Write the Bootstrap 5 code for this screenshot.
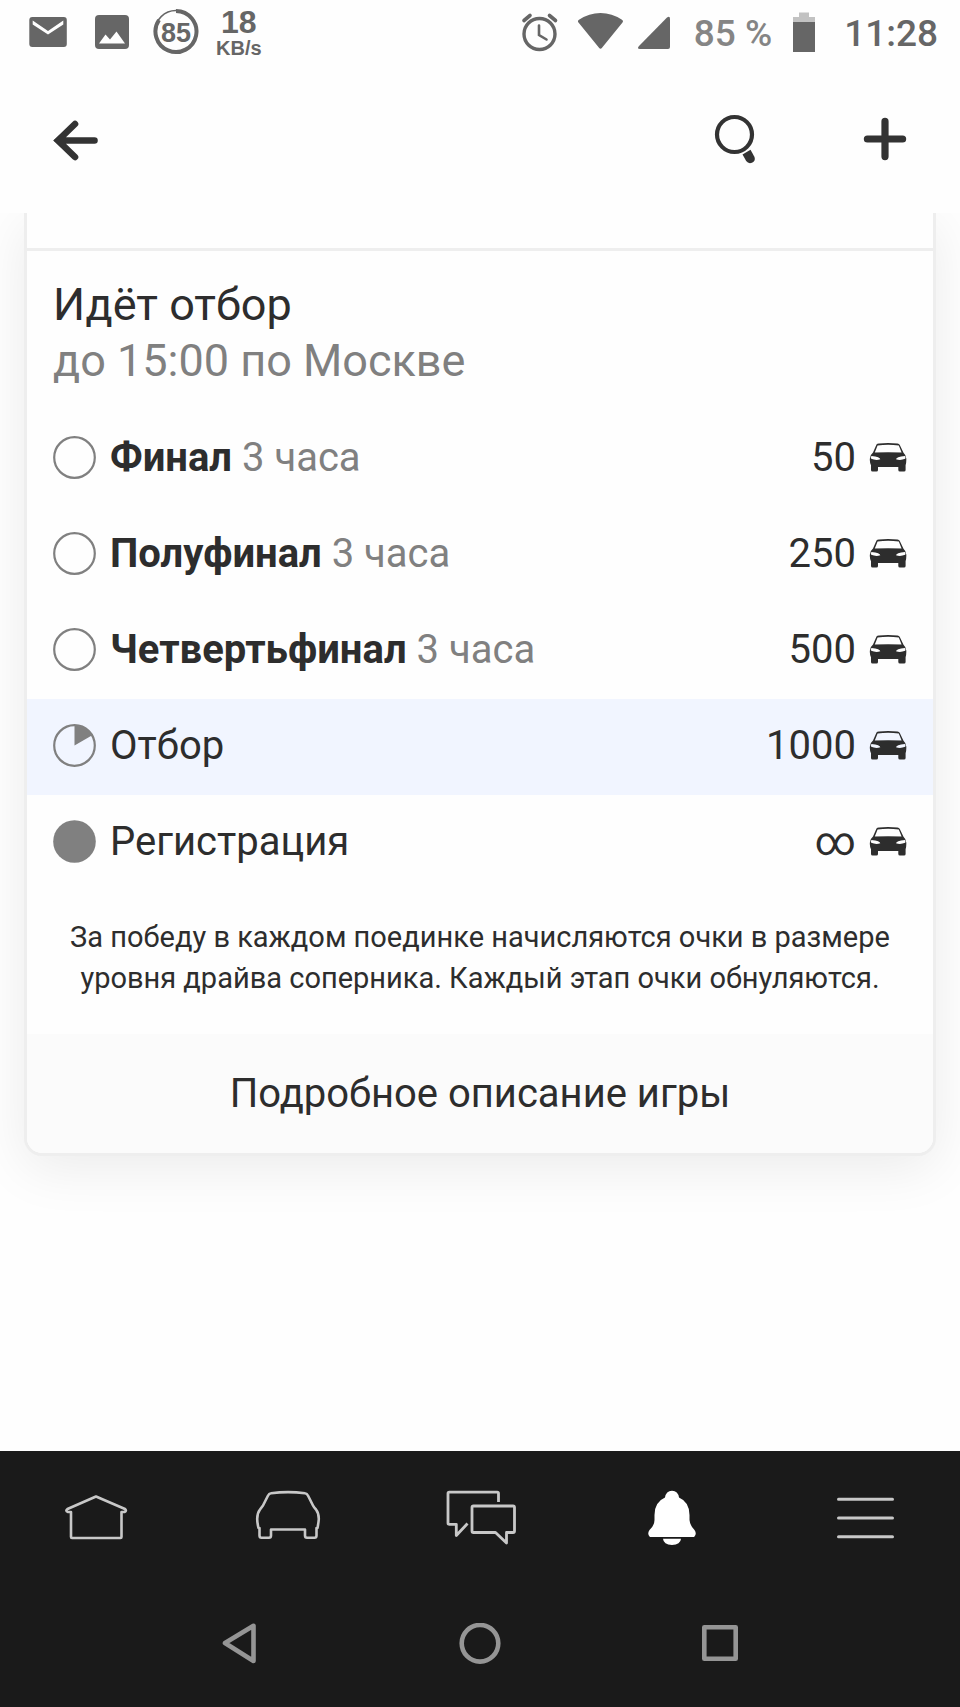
<!DOCTYPE html>
<html lang="ru">
<head>
<meta charset="utf-8">
<meta name="viewport" content="width=device-width, initial-scale=1">
<title>Идёт отбор</title>
<link href="https://cdn.jsdelivr.net/npm/bootstrap@5.3.0/dist/css/bootstrap.min.css" rel="stylesheet">
<style>
  body { font-family: Roboto, "Noto Sans", sans-serif; background: #fefefe; color: #2d2d2d; font-size: 40px; line-height: 48px; }
  svg { display: block; flex: none; }
  .status-bar { height: 64px; padding: 0 22px 0 24px; color: #666; }
  .status-left { gap: 16px; }
  .status-right { gap: 12px; font-size: 37px; font-weight: 500; }
  .status-right span, .status-right time { padding-top: 4px; }
  .charge { color: #858585; }
  .net-speed { font-family: "Liberation Sans", sans-serif; font-weight: 700; font-size: 20px; line-height: 20px; padding-bottom: 1px; }
  .net-speed b { font-size: 32px; line-height: 32px; }
  .app-bar { height: 149px; padding: 0 48px; gap: 72px; }
  .app-bar .btn { color: #333; }
  .stage-area { padding: 0 24px; }
  .game-card { border: 3px solid #eee; border-top: 0; border-radius: 0 0 18px 18px; background: #fefefe; box-shadow: 0 12px 54px rgba(0, 0, 0, .08); }
  .card-head { height: 35px; }
  .game-title { border-top: 3px solid #eee; padding: 26px 26px 22px; font-size: 45px; line-height: 56px; font-weight: 400; }
  .soft { color: #808080; font-weight: 400; }
  .stage { height: 96px; padding: 0 26px 2px; }
  .stage.current { background: #f1f5ff; }
  .stage-name { gap: 14px; }
  .stage-limit { gap: 13px; }
  .stage-name svg { margin-bottom: 2px; color: #808080; }
  .hint { font-size: 29px; line-height: 41px; padding: 26px 26px 35px; }
  .more { background: #fbfbfb; color: inherit; padding: 36px 26px 35px; border-radius: 0 0 15px 15px; }
  .bottom { background: #1a1a1a; color: #c8c8c8; }
  .tabs { height: 132px; }
  .tabs a { color: inherit; }
  .tabs a.active { color: #fff; }
  .system { height: 124px; color: #959595; }
  .system .btn { width: 25%; color: inherit; }
</style>
</head>
<body class="d-flex flex-column min-vh-100">
<svg width="0" height="0" class="position-absolute" aria-hidden="true">
  <symbol id="car" viewBox="0 0 38 30">
    <path fill="currentColor" fill-rule="evenodd" d="M7.500 1.500 Q8 .8 10 .6 Q19 -.4 28.500 .6 Q30.200 .8 30.800 2 L34.500 9.800 Q37 12 37.300 15.500 Q37.500 19 36.600 22.200 V27 Q36.600 28.500 35 28.500 H31 Q29.300 28.500 29.300 27 V24 H9 V27 Q9 28.500 7.400 28.500 H3.600 Q2 28.500 2 27 V22.200 Q.5 19 .9 15.500 Q1 12 4 9.600 Z M8.600 2.400 L5.800 9.600 Q19 9 32.600 9.600 L29.800 2.400 Q19 1 8.600 2.400 Z M2.500 13 Q1.500 14.200 2.200 15.800 Q7 17.800 11.300 16.300 Q11.200 14 2.500 13 Z M35.800 13 Q27.200 14 27 16.300 Q31.500 17.800 36.200 15.800 Q36.800 14.200 35.800 13 Z"/>
  </symbol>
  <symbol id="ring" viewBox="0 0 43 43"><circle cx="21.500" cy="21.500" r="20.300" fill="none" stroke="currentColor" stroke-width="2.200"/></symbol>
</svg>

<header>
  <div class="status-bar d-flex justify-content-between align-items-center">
    <div class="status-left d-flex align-items-center">
      <svg width="48" height="64" fill="#666"><rect x="5.300" y="17" width="37.500" height="30" rx="3"/><path d="M8.700 20.500 L24 31 L39.300 20.500 V24.500 L24 34.500 L8.700 24.500 Z" fill="#fefefe"/></svg>
      <svg width="48" height="64" fill="#666"><rect x="7" y="15" width="34" height="34" rx="4"/><path d="M11 43.500 L17.500 34.500 L22 39.500 L28.500 31.500 L37 43.500 Z" fill="#fefefe"/></svg>
      <svg width="48" height="64" fill="none" stroke="#666"><circle cx="24" cy="31.500" r="21" stroke-width="1.500"/><path d="M24 11 A20.500 20.500 0 1 1 7 20" stroke-width="4"/><text x="24" y="42" text-anchor="middle" fill="#666" stroke="none" font-family="Liberation Sans" font-weight="700" font-size="27">85</text></svg>
      <div class="net-speed d-flex flex-column align-items-center"><b>18</b><span>KB/s</span></div>
    </div>
    <div class="status-right d-flex align-items-center">
      <svg width="48" height="64" fill="none" stroke="#666" stroke-linecap="round"><circle cx="21.500" cy="34" r="15.500" stroke-width="3.400"/><path d="M21 25.500 V35 L28.500 39.500" stroke-width="2.600"/><path d="M6 20.500 L12 15.500 M37.500 20.500 L31.500 15.500" stroke-width="3.600"/></svg>
      <svg width="48" height="64" fill="#666"><path d="M.5 22.500 Q-.8 21 1 19.800 Q11 13 22.500 13 Q34 13 44 19.800 Q45.700 21 44.500 22.500 L24 47.800 Q22.500 49.600 21 47.800 Z"/></svg>
      <svg width="36" height="64" fill="#666"><path d="M1 46 L29 17.500 Q32 15.500 32 19 V47 Q32 49 30 49 H2 Q-1.500 49 1 46 Z"/></svg>
      <span class="charge ms-2">85 %</span>
      <svg class="ms-2" width="24" height="64"><path d="M7 12.500 h10 v4.500 h6 v5 H1 V17 h6 Z" fill="#c2c2c2"/><path d="M1 22 h22 v30 H1 Z" fill="#666"/></svg>
      <time class="ms-3">11:28</time>
    </div>
  </div>
  <div class="app-bar d-flex align-items-center">
    <button class="btn border-0 p-0 me-auto" aria-label="Назад"><svg width="54" height="54" fill="none" stroke="currentColor" stroke-width="6.600" stroke-linecap="round"><path d="M27 12 L10 28.500 L27 45 M13 28.500 H46.500"/><path d="M5.500 28.500 L13 22 V35 Z" fill="currentColor" stroke="none"/></svg></button>
    <button class="btn border-0 p-0" aria-label="Поиск"><svg width="72" height="54" fill="none" stroke="currentColor"><circle cx="20.500" cy="22.500" r="17.500" stroke-width="4.200"/><path d="M28.500 42.500 L36.500 37.800 L40.500 45 Q41.800 49 38 50.800 Q34.200 52 32.200 49 Z" fill="currentColor" stroke="none"/></svg></button>
    <button class="btn border-0 p-0" aria-label="Добавить"><svg width="54" height="54" fill="none" stroke="currentColor" stroke-width="7.200" stroke-linecap="round"><path d="M27 9.400 V44.600 M9.400 27 H44.600"/></svg></button>
  </div>
</header>

<main class="stage-area flex-grow-1 overflow-hidden">
  <section class="game-card">
    <div class="card-head"></div>
    <h1 class="game-title m-0">Идёт отбор<br><span class="soft">до 15:00 по Москве</span></h1>
    <ul class="list-unstyled m-0">
      <li class="stage d-flex justify-content-between align-items-center">
        <div class="stage-name d-flex align-items-center"><svg width="43" height="43"><use href="#ring"/></svg><span><b>Финал</b> <span class="soft">3 часа</span></span></div>
        <div class="stage-limit d-flex align-items-center">50 <svg width="38" height="30"><use href="#car"/></svg></div>
      </li>
      <li class="stage d-flex justify-content-between align-items-center">
        <div class="stage-name d-flex align-items-center"><svg width="43" height="43"><use href="#ring"/></svg><span><b>Полуфинал</b> <span class="soft">3 часа</span></span></div>
        <div class="stage-limit d-flex align-items-center">250 <svg width="38" height="30"><use href="#car"/></svg></div>
      </li>
      <li class="stage d-flex justify-content-between align-items-center">
        <div class="stage-name d-flex align-items-center"><svg width="43" height="43"><use href="#ring"/></svg><span><b>Четвертьфинал</b> <span class="soft">3 часа</span></span></div>
        <div class="stage-limit d-flex align-items-center">500 <svg width="38" height="30"><use href="#car"/></svg></div>
      </li>
      <li class="stage current d-flex justify-content-between align-items-center">
        <div class="stage-name d-flex align-items-center"><svg width="43" height="43"><use href="#ring"/><path d="M21.500 21.500 V1.500 A20 20 0 0 1 38.800 11.500 Z" fill="currentColor"/></svg><span>Отбор</span></div>
        <div class="stage-limit d-flex align-items-center">1000 <svg width="38" height="30"><use href="#car"/></svg></div>
      </li>
      <li class="stage d-flex justify-content-between align-items-center">
        <div class="stage-name d-flex align-items-center"><svg width="43" height="43"><circle cx="21.500" cy="21.500" r="21.300" fill="currentColor"/></svg><span>Регистрация</span></div>
        <div class="stage-limit d-flex align-items-center">∞ <svg width="38" height="30"><use href="#car"/></svg></div>
      </li>
    </ul>
    <p class="hint text-center m-0">За победу в каждом поединке начисляются очки в размере уровня драйва соперника. Каждый этап очки обнуляются.</p>
    <a href="#" class="more d-block text-center text-decoration-none">Подробное описание игры</a>
  </section>
</main>

<footer class="bottom">
  <nav class="tabs row row-cols-5 g-0 align-items-center">
    <a href="#" class="col d-flex justify-content-center" aria-label="Дом"><svg width="72" height="60" fill="none" stroke="currentColor" stroke-width="2.600" stroke-linejoin="round"><path d="M36 9.500 L65 22 Q67 24 64.500 25 H61.500 V50 Q61.500 51 60.500 51 H12 Q11 51 11 50 V25 H8 Q5 24 7.500 22 Z"/></svg></a>
    <a href="#" class="col d-flex justify-content-center" aria-label="Машина"><svg width="72" height="60" fill="none" stroke="currentColor" stroke-width="2.600" stroke-linejoin="round"><path d="M19 6.300 Q36 4 53 6.300 Q55 6.500 56.200 9 L61 18.500 Q62 20.500 64 22.500 Q66.800 26 66.800 32 Q66.500 36 65.500 41 H64.500 V48.500 Q64.500 50.700 62.500 50.700 H55 Q53 50.700 53 48.500 V42.500 H19 V48.500 Q19 50.700 17 50.700 H9.500 Q7.500 50.700 7.500 48.500 V41 H6.500 Q5.200 36 5.200 32 Q5.200 26 8 22.500 L11 18.500 L15.800 9 Q17 6.500 19 6.300 Z"/></svg></a>
    <a href="#" class="col d-flex justify-content-center" aria-label="Чат"><svg width="72" height="60" fill="none" stroke="currentColor" stroke-width="2.800" stroke-linejoin="round"><path d="M54.500 15 V6.500 Q54.500 5.200 53.200 5.200 H5.300 Q4 5.200 4 6.500 V36 Q4 37.300 5.300 37.300 H12.300 V48.500 L23.500 36.500"/><path d="M29.500 19 H69 Q70.500 19 70.500 20.500 V44 Q70.500 45.500 69 45.500 H62.500 V56 L51.500 45.500 H29.500 Q28 45.500 28 44 V20.500 Q28 19 29.500 19 Z"/></svg></a>
    <a href="#" class="col d-flex justify-content-center active" aria-label="Уведомления" aria-current="page"><svg width="72" height="60" fill="currentColor"><path d="M36 3.800 Q42 4 43 10.500 Q53.500 15 53.500 28 V33 Q54 38.500 58.500 43 Q61 46.500 58.500 49.500 Q58 50 57 50 H15 Q14 50 13.500 49.500 Q11 46.500 13.500 43 Q18.500 38.500 18.500 33 V28 Q18.500 15 29 10.500 Q30 4 36 3.800 Z M27 51.700 H45 Q44.500 57.800 36 57.900 Q27.500 57.800 27 51.700 Z"/></svg></a>
    <a href="#" class="col d-flex justify-content-center" aria-label="Меню"><svg width="72" height="60" fill="none" stroke="currentColor" stroke-width="3" stroke-linecap="round"><path d="M10.500 12.200 H64.500 M10.500 31 H64.500 M10.500 49.700 H64.500"/></svg></a>
  </nav>
  <div class="system d-flex justify-content-center align-items-center">
    <button class="btn border-0 p-0 d-flex justify-content-center" aria-label="Назад"><svg width="44" height="44" fill="none" stroke="currentColor" stroke-width="4.600" stroke-linejoin="round"><path d="M7 20 L35.500 2.800 V38 Z"/></svg></button>
    <button class="btn border-0 p-0 d-flex justify-content-center" aria-label="Домой"><svg width="44" height="44" fill="none" stroke="currentColor" stroke-width="4.600"><circle cx="22" cy="20.300" r="18.300"/></svg></button>
    <button class="btn border-0 p-0 d-flex justify-content-center" aria-label="Недавние"><svg width="44" height="44" fill="none" stroke="currentColor" stroke-width="4.600" stroke-linejoin="round"><rect x="6.300" y="4.300" width="31.400" height="31.400"/></svg></button>
  </div>
</footer>
<script src="https://cdn.jsdelivr.net/npm/bootstrap@5.3.0/dist/js/bootstrap.bundle.min.js"></script>
</body>
</html>
